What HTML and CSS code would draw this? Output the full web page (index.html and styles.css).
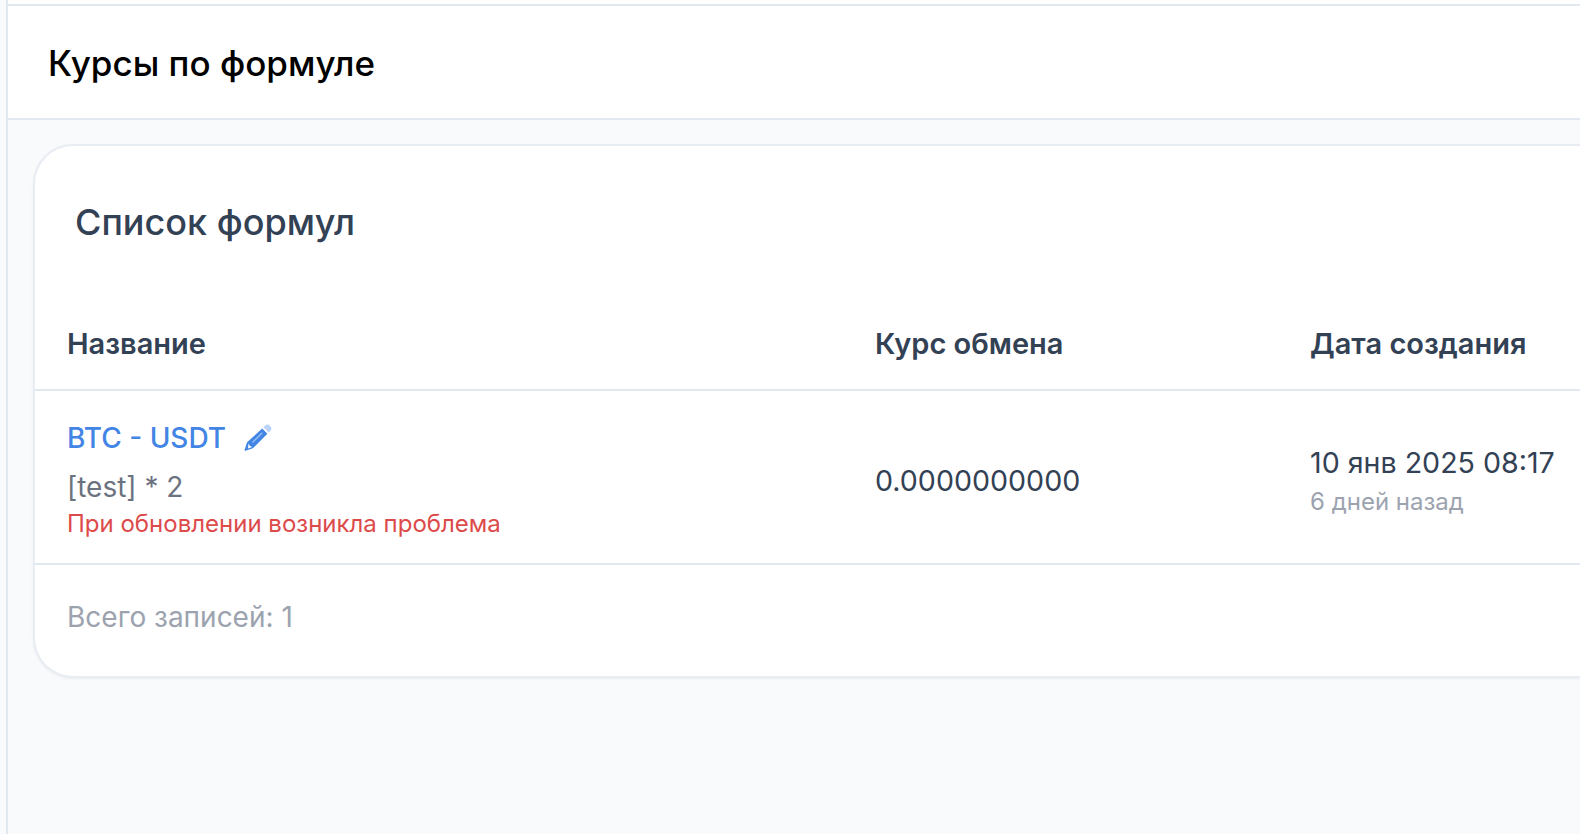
FILE: index.html
```html
<!DOCTYPE html>
<html lang="ru">
<head>
<meta charset="utf-8">
<title>Курсы по формуле</title>
<link rel="stylesheet" href="styles.css">
</head>
<body>
<div class="rail"></div>
<div class="main">
  <div class="topbar"></div>
  <header class="page-header"><h1 class="page-title">Курсы по формуле</h1></header>
  <section class="card">
    <h2 class="card-title">Список формул</h2>
    <table class="table">
      <thead>
        <tr>
          <th class="col-name">Название</th>
          <th class="col-rate">Курс обмена</th>
          <th class="col-date">Дата создания</th>
        </tr>
      </thead>
      <tbody>
        <tr>
          <td>
            <div class="name-line">
              <a class="link" href="#">BTC - USDT</a>
              <svg class="pencil" viewBox="0 0 28 28" aria-hidden="true">
                <path class="pencil-light" d="M19.6 3.2 21 1.8a3.6 3.6 0 0 1 5 0l.2.2a3.6 3.6 0 0 1 0 5l-1.400 1.400z"/>
                <path class="pencil-dark" d="M18.200 4.600 23.400 9.800 9.400 23.800a3 3 0 0 1-1.300.8L1.600 26.700a.8.8 0 0 1-1-1L2.800 19.100a3 3 0 0 1 .8-1.300z"/>
                <path class="pencil-stripe" d="M8.500 18.500 18.300 8.700"/>
                <path class="pencil-tip" d="M4.500 19.500 5.800 21.800 8.200 23 4 24.500z"/>
              </svg>
            </div>
            <div class="formula">[test] * 2</div>
            <div class="error">При обновлении возникла проблема</div>
          </td>
          <td class="rate">0.0000000000</td>
          <td>
            <div class="date">10 янв 2025 08:17</div>
            <div class="ago">6 дней назад</div>
          </td>
        </tr>
      </tbody>
    </table>
    <footer class="card-footer">Всего записей: 1</footer>
  </section>
</div>
</body>
</html>
```

FILE: styles.css
```css
* { box-sizing: border-box; }
html, body { height: 100%; }
body {
  margin: 0;
  display: flex;
  overflow: hidden;
  background: #f8fafc;
  font-family: Inter, "Noto Sans", sans-serif;
  color: #334155;
}
.rail {
  flex: 0 0 8px;
  background: #f8fafc;
  border-right: 2px solid #e2e8f0;
}
.main { flex: 1 1 auto; min-width: 0; }
.topbar {
  height: 6px;
  background: #fff;
  border-bottom: 2px solid #e2e8f0;
}
.page-header {
  height: 114px;
  padding: 2px 0 0 40px;
  display: flex;
  align-items: center;
  background: #fff;
  border-bottom: 2px solid #e2e8f0;
}
.page-title {
  margin: 0;
  font-size: 35px;
  line-height: 40px;
  font-weight: 500;
  color: #000;
}
.card {
  width: 1700px;
  margin: 24px 0 0 25px;
  background: #fff;
  border: 2px solid #e8edf3;
  border-width: 2px 0 2px 2px;
  border-radius: 40px;
  box-shadow: 0 1px 3px rgba(15, 23, 42, .06);
}
.card-title {
  margin: 0;
  padding: 55px 0 0 40px;
  font-size: 36px;
  line-height: 42px;
  font-weight: 500;
  color: #334155;
}
.table {
  width: 100%;
  margin-top: 83px;
  border-collapse: collapse;
  table-layout: fixed;
}
.table th {
  text-align: left;
  font-size: 29px;
  line-height: 36px;
  font-weight: 600;
  padding: 0 0 27px 32px;
  border-bottom: 2px solid #e2e8f0;
}
.col-name { width: 808px; }
.col-rate { width: 435px; }
.table td {
  padding: 29px 0 21px 32px;
  vertical-align: middle;
  border-bottom: 2px solid #e2e8f0;
}
.name-line { display: flex; align-items: center; gap: 18px; }
.link { font-size: 28px; line-height: 36px; font-weight: 500; color: #4285e4; text-decoration: none; }
.pencil { width: 28px; height: 28px; }
.pencil-light { fill: #b9d3fa; }
.pencil-dark { fill: #4285e4; }
.pencil-stripe { stroke: #93bdf5; stroke-width: 1.500; fill: none; }
.pencil-tip { fill: #fff; }
.formula { margin-top: 13px; font-size: 28px; line-height: 36px; color: #6b7280; }
.error { margin-top: 1px; font-size: 24px; line-height: 36px; color: #dd4a4a; }
.rate { font-size: 28.600px; line-height: 36px; }
.date { font-size: 28.600px; line-height: 38px; }
.ago { margin-top: 4px; font-size: 24px; line-height: 32px; color: #9ca3af; }
.card-footer {
  padding: 34px 32px 41px;
  font-size: 28px;
  line-height: 36px;
  color: #9ca3af;
}
```
